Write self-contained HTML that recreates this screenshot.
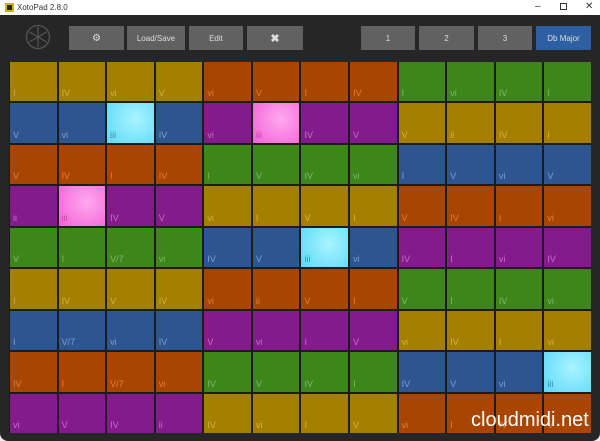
<!DOCTYPE html>
<html><head><meta charset="utf-8"><style>
*{margin:0;padding:0;box-sizing:border-box}
body{width:600px;height:441px;background:#f0f0f0;font-family:"Liberation Sans",sans-serif;overflow:hidden;position:relative}
.tb{position:absolute;left:0;top:0;width:600px;height:15px;background:#fff;font-size:8px;color:#333}
.win{position:absolute;left:0;top:15px;width:600px;height:426px;background:#262626;border-radius:0 0 8px 8px}
.btn{position:absolute;top:26px;height:24px;background:#616161;color:#ddd;font-size:8px;display:flex;align-items:center;justify-content:center}
.grid{position:absolute;left:9px;top:62px;width:582px;height:371px;background:#1c1c1c;display:grid;grid-template-columns:repeat(12,1fr);grid-template-rows:repeat(9,1fr);gap:2px;padding:0 0 0 1px}
.grid div{position:relative;font-size:9px;padding:0 0 3px 3px;display:flex;align-items:flex-end}
.Y{background:#a47f00;color:#d4b24a}.O{background:#a94500;color:#d98040}.G{background:#3f861a;color:#7fb86a}
.B{background:#2d5590;color:#7f9fd0}.P{background:#831b8c;color:#c070c8}
.C{background:radial-gradient(circle at 60% 40%,#a8f4ff,#5cd8f8);color:#4a8aa8}
.K{background:radial-gradient(circle at 60% 40%,#ffa8ee,#f260d8);color:#b850a0}
.wm{position:absolute;left:471px;top:409px;color:#fff;font-size:20px}
</style></head><body>
<div class="tb"><span style="position:absolute;left:5px;top:3px;width:9px;height:9px;background:#222;border:2px solid #d8b000"></span><span style="position:absolute;left:17px;top:3px">XotoPad 2.8.0</span>
<span style="position:absolute;left:535px;top:1px;font-size:10px">–</span><span style="position:absolute;left:560px;top:3px;width:7px;height:7px;border:1px solid #333"></span><span style="position:absolute;left:585px;top:1px;font-size:10px">✕</span></div>
<div class="win"></div>
<svg style="position:absolute;left:25px;top:24px" width="26" height="26" viewBox="0 0 26 26"><circle cx="13" cy="13" r="11.5" fill="none" stroke="#555" stroke-width="1.3"/><g stroke="#555" stroke-width="1.3"><line x1="13" y1="3" x2="13" y2="23"/><line x1="4.5" y1="8" x2="21.5" y2="18"/><line x1="4.5" y1="18" x2="21.5" y2="8"/></g></svg>
<div class="btn" style="left:69px;width:55px;font-size:10px">⚙</div>
<div class="btn" style="left:127px;width:58px">Load/Save</div>
<div class="btn" style="left:189px;width:54px">Edit</div>
<div class="btn" style="left:247px;width:56px;font-size:11px;font-weight:bold">✖</div>
<div class="btn" style="left:361px;width:54px">1</div>
<div class="btn" style="left:419px;width:55px">2</div>
<div class="btn" style="left:478px;width:54px">3</div>
<div class="btn" style="left:536px;width:55px;background:#2e5fa2">Db Major</div>
<div class="grid">
<div class="Y">I</div><div class="Y">IV</div><div class="Y">vi</div><div class="Y">V</div><div class="O">vi</div><div class="O">V</div><div class="O">I</div><div class="O">IV</div><div class="G">I</div><div class="G">vi</div><div class="G">IV</div><div class="G">I</div>
<div class="B">V</div><div class="B">vi</div><div class="C">iii</div><div class="B">IV</div><div class="P">vi</div><div class="K">iii</div><div class="P">IV</div><div class="P">V</div><div class="Y">V</div><div class="Y">ii</div><div class="Y">IV</div><div class="Y">I</div>
<div class="O">V</div><div class="O">IV</div><div class="O">I</div><div class="O">IV</div><div class="G">I</div><div class="G">V</div><div class="G">IV</div><div class="G">vi</div><div class="B">I</div><div class="B">V</div><div class="B">vi</div><div class="B">V</div>
<div class="P">ii</div><div class="K">iii</div><div class="P">IV</div><div class="P">V</div><div class="Y">vi</div><div class="Y">I</div><div class="Y">V</div><div class="Y">I</div><div class="O">V</div><div class="O">IV</div><div class="O">I</div><div class="O">vi</div>
<div class="G">V</div><div class="G">I</div><div class="G">V/7</div><div class="G">vi</div><div class="B">IV</div><div class="B">V</div><div class="C">iii</div><div class="B">vi</div><div class="P">IV</div><div class="P">I</div><div class="P">vi</div><div class="P">IV</div>
<div class="Y">I</div><div class="Y">IV</div><div class="Y">V</div><div class="Y">IV</div><div class="O">vi</div><div class="O">ii</div><div class="O">V</div><div class="O">I</div><div class="G">V</div><div class="G">I</div><div class="G">IV</div><div class="G">vi</div>
<div class="B">I</div><div class="B">V/7</div><div class="B">vi</div><div class="B">IV</div><div class="P">V</div><div class="P">vi</div><div class="P">I</div><div class="P">V</div><div class="Y">vi</div><div class="Y">IV</div><div class="Y">I</div><div class="Y">vi</div>
<div class="O">IV</div><div class="O">I</div><div class="O">V/7</div><div class="O">vi</div><div class="G">IV</div><div class="G">V</div><div class="G">IV</div><div class="G">I</div><div class="B">IV</div><div class="B">V</div><div class="B">vi</div><div class="C">iii</div>
<div class="P">vi</div><div class="P">V</div><div class="P">IV</div><div class="P">ii</div><div class="Y">IV</div><div class="Y">vi</div><div class="Y">I</div><div class="Y">V</div><div class="O">vi</div><div class="O">I</div><div class="O">IV</div><div class="O">V</div>
</div>
<div class="wm">cloudmidi.net</div>
</body></html>
